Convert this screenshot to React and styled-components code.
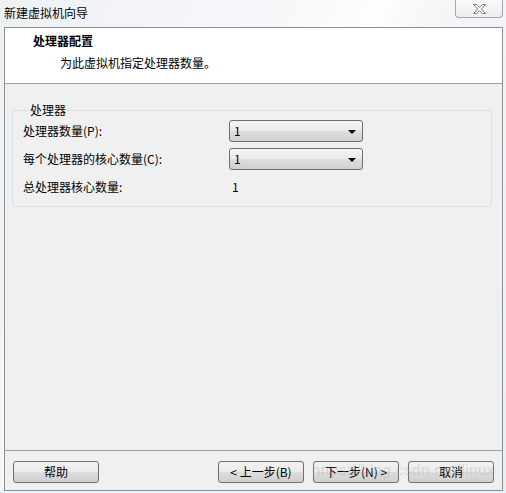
import React from 'react';
import styled, { createGlobalStyle } from 'styled-components';

const GlobalStyle = createGlobalStyle`
  html, body {
    margin: 0;
    padding: 0;
    background: #e6f5fa;
  }
  body {
    font-family: "Noto Sans CJK SC", "Liberation Sans", sans-serif;
    font-size: 12px;
    color: #000;
  }
`;

const Window = styled.div`
  position: relative;
  width: 506px;
  height: 491px;
  display: flex;
  flex-direction: column;
  background: linear-gradient(115deg, #eef1f4 0%, #f6f8fa 40%, #fdfdfd 52%, #f3f5f7 62%, #eceff2 100%);
`;

const TitleBar = styled.div`
  height: 27px;
  display: flex;
  justify-content: space-between;
  align-items: flex-start;
  flex-shrink: 0;
`;

const Title = styled.div`
  padding: 5px 0 0 4px;
  line-height: 16px;
  font-size: 12px;
`;

const CloseButton = styled.div`
  width: 46px;
  height: 17px;
  margin-right: 3px;
  border: 1px solid #a3a7ab;
  border-top: none;
  border-radius: 0 0 4px 4px;
  background: linear-gradient(#f8f9fa, #eceef0);
  display: flex;
  align-items: center;
  justify-content: center;
`;

const Frame = styled.div`
  flex: 1;
  margin: 0 3px 0 4px;
  border: 1px solid #8e9193;
  display: flex;
  flex-direction: column;
  background: #f0f0f0;
`;

const Header = styled.div`
  height: 56px;
  background: #fff;
  border-bottom: 1px solid #a0a0a0;
  padding: 5px 0 0 28px;
  box-sizing: border-box;
  flex-shrink: 0;
`;

const HeaderTitle = styled.div`
  font-weight: bold;
  line-height: 16px;
`;

const HeaderSub = styled.div`
  line-height: 16px;
  margin: 6px 0 0 27px;
`;

const Body = styled.div`
  flex: 1;
  padding: 18px 10px 0 7px;
`;

const Group = styled.fieldset`
  margin: 0;
  border: 1px solid #d5dfe5;
  border-radius: 3px;
  padding: 2px 10px 11px 10px;
  min-width: 0;
`;

const Legend = styled.legend`
  padding: 0 1px;
  margin-left: 6px;
  line-height: 16px;
`;

const Grid = styled.div`
  display: grid;
  grid-template-columns: 206px 134px;
  row-gap: 6px;
  align-items: center;
`;

const Label = styled.div`
  line-height: 16px;
  margin-top: ${props => (props.last ? '3px' : '0')};
`;

const Value = styled.div`
  line-height: 16px;
  padding: 0 0 0 3px;
  margin-top: 3px;
`;

const Select = styled.div`
  height: 22px;
  box-sizing: border-box;
  border: 1px solid #707070;
  border-radius: 3px;
  background: linear-gradient(#f3f3f3 0%, #ebebeb 48%, #dddddd 52%, #d0d0d0 100%);
  display: flex;
  align-items: center;
  justify-content: space-between;
  padding: 0 6px 0 4px;
  line-height: 16px;
`;

const Arrow = styled.span`
  width: 0;
  height: 0;
  border-left: 4px solid transparent;
  border-right: 4px solid transparent;
  border-top: 4px solid #000;
  margin-top: 1px;
`;

const Footer = styled.div`
  border-top: 1px solid #a0a0a0;
  padding: 10px 8px 7px 8px;
  display: flex;
  align-items: center;
  flex-shrink: 0;
`;

const Spacer = styled.div`
  flex: 1;
`;

const Button = styled.div`
  width: 86px;
  height: 22px;
  box-sizing: border-box;
  border: 1px solid #707070;
  border-radius: 3px;
  background: linear-gradient(#f2f2f2 0%, #ebebeb 48%, #dddddd 52%, #cfcfcf 100%);
  display: flex;
  align-items: center;
  justify-content: center;
  line-height: 16px;
  margin-left: ${props => (props.gap ? '9px' : '0')};
`;

const Watermark = styled.div`
  position: absolute;
  left: 312px;
  top: 461px;
  font-family: "Liberation Sans", sans-serif;
  font-size: 15px;
  letter-spacing: 0.5px;
  color: rgba(170, 170, 170, 0.35);
  pointer-events: none;
`;

const CloseIcon = () => (
  <svg width="13" height="10" viewBox="0 0 13 10">
    <polygon
      points="0.5,0.5 3.5,0.5 6.5,3.3 9.5,0.5 12.5,0.5 8.3,5 12.5,9.5 9.5,9.5 6.5,6.7 3.5,9.5 0.5,9.5 4.7,5"
      fill="#fbfbfb"
      stroke="#6a6d70"
      strokeWidth="0.9"
      strokeLinejoin="round"
    />
  </svg>
);

export default function App() {
  return (
    <>
      <GlobalStyle />
      <Window>
        <TitleBar>
          <Title>新建虚拟机向导</Title>
          <CloseButton>
            <CloseIcon />
          </CloseButton>
        </TitleBar>
        <Frame>
          <Header>
            <HeaderTitle>处理器配置</HeaderTitle>
            <HeaderSub>为此虚拟机指定处理器数量。</HeaderSub>
          </Header>
          <Body>
            <Group>
              <Legend>处理器</Legend>
              <Grid>
                <Label>处理器数量(P):</Label>
                <Select>
                  <span>1</span>
                  <Arrow />
                </Select>
                <Label>每个处理器的核心数量(C):</Label>
                <Select>
                  <span>1</span>
                  <Arrow />
                </Select>
                <Label last>总处理器核心数量:</Label>
                <Value>1</Value>
              </Grid>
            </Group>
          </Body>
          <Footer>
            <Button>帮助</Button>
            <Spacer />
            <Button>&lt; 上一步(B)</Button>
            <Button gap>下一步(N) &gt;</Button>
            <Button gap>取消</Button>
          </Footer>
        </Frame>
        <Watermark>https://blog.csdn.net/linux</Watermark>
      </Window>
    </>
  );
}
